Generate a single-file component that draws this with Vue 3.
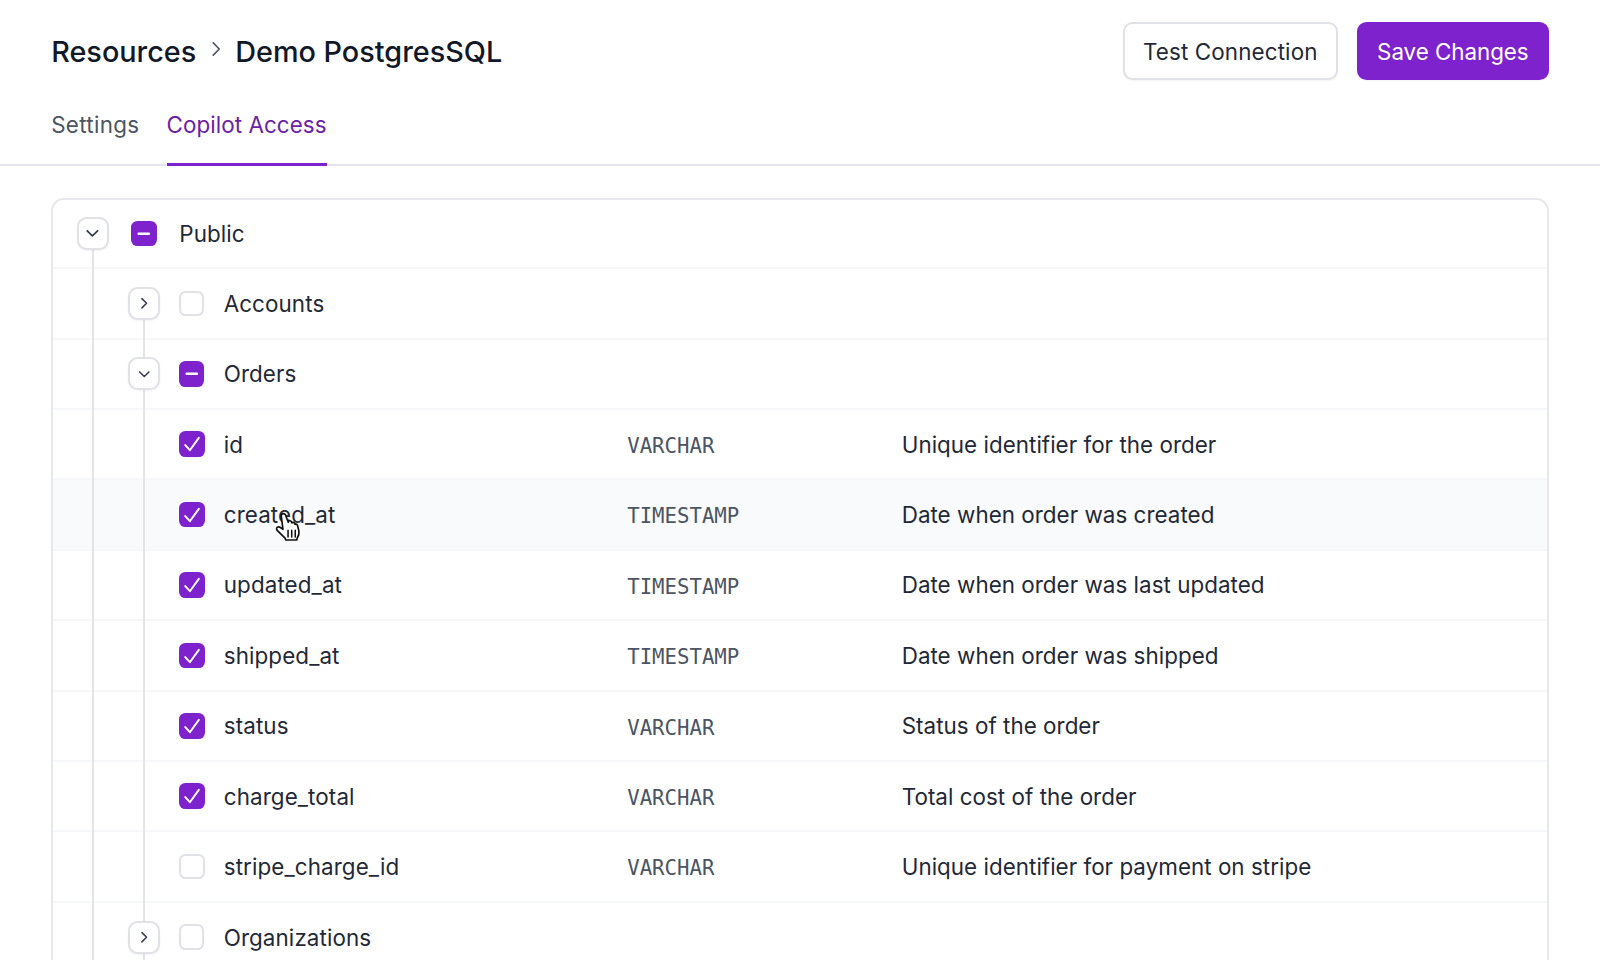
<template>
  <div class="page">
    <header class="top">
      <div class="top-row">
        <div class="crumbs">
          <span>Resources</span>
          <svg class="crumb-sep" viewBox="0 0 20 20" fill="none"><path d="M7.5 4.5 13 10l-5.500 5.500" stroke="currentColor" stroke-width="1.500" stroke-linecap="round" stroke-linejoin="round"/></svg>
          <span>Demo PostgresSQL</span>
        </div>
        <div class="actions">
          <button class="btn">Test Connection</button>
          <button class="btn btn-primary">Save Changes</button>
        </div>
      </div>
      <nav class="tabs">
        <a class="tab tab-plain">Settings</a>
        <a class="tab is-active">Copilot Access</a>
      </nav>
    </header>

    <main class="content">
      <div class="tree">
        <span class="line line-1"></span>
        <span class="line line-2"></span>
        <div
          v-for="row in rows"
          :key="row.name"
          class="row"
          :class="{ 'is-hover': row.hover }"
        >
          <div class="cell-name" :class="'level-' + row.level">
            <span v-if="row.toggle" class="toggle">
              <svg viewBox="0 0 20 20" fill="none">
                <path v-if="row.toggle === 'open'" d="M5 7.500 10 12.500l5-5" stroke="currentColor" stroke-width="1.700" stroke-linecap="round" stroke-linejoin="round"/>
                <path v-else d="M7.500 5 12.500 10l-5 5" stroke="currentColor" stroke-width="1.700" stroke-linecap="round" stroke-linejoin="round"/>
              </svg>
            </span>
            <span class="check" :class="{ 'is-on': row.state !== 'off' }">
              <svg v-if="row.state === 'all'" viewBox="0 0 16 16" fill="none"><path d="M3.900 8.800 6.800 12 12.400 4.300" stroke="#fff" stroke-width="1.200" stroke-linecap="round" stroke-linejoin="round"/></svg>
              <svg v-else-if="row.state === 'some'" viewBox="0 0 16 16" fill="none"><path d="M4.800 8h6.400" stroke="#fff" stroke-width="1.500" stroke-linecap="round"/></svg>
            </span>
            <span class="label">{{ row.name }}</span>
          </div>
          <div class="cell-type">{{ row.type }}</div>
          <div class="cell-desc">{{ row.desc }}</div>
        </div>
        <svg class="cursor" viewBox="0 0 26 28">
          <path d="M8.500 2.600c1.100-.5 2.200 0 2.700 1l2.500 6.600.3-1c.7-.7 2-.5 2.500.4l.5 1.100c.6-.7 1.900-.6 2.400.3l.5 1c.8-.4 1.800 0 2.100.9l1.300 5.100c.4 2.300-.2 4.400-1.400 6.200l-.6 2H11.500l-.7-1.700-6.900-6.800c-1-1-1-2.200-.2-2.900.8-.7 2-.6 2.900.1l2.300 1.700L7.400 4.900c-.3-1 .1-1.900 1.100-2.300Z" fill="#fff" stroke="#111" stroke-width="1.500" stroke-linejoin="round"/>
          <path d="M13.500 17.500v6M16.800 17.500v6M20 17.500v6" stroke="#111" stroke-width="1.400" stroke-linecap="round"/>
        </svg>
      </div>
    </main>
  </div>
</template>

<script setup>
const rows = [
  { name: 'Public', level: 0, toggle: 'open', state: 'some' },
  { name: 'Accounts', level: 1, toggle: 'closed', state: 'off' },
  { name: 'Orders', level: 1, toggle: 'open', state: 'some' },
  { name: 'id', level: 2, state: 'all', type: 'VARCHAR', desc: 'Unique identifier for the order' },
  { name: 'created_at', level: 2, state: 'all', type: 'TIMESTAMP', desc: 'Date when order was created', hover: true },
  { name: 'updated_at', level: 2, state: 'all', type: 'TIMESTAMP', desc: 'Date when order was last updated' },
  { name: 'shipped_at', level: 2, state: 'all', type: 'TIMESTAMP', desc: 'Date when order was shipped' },
  { name: 'status', level: 2, state: 'all', type: 'VARCHAR', desc: 'Status of the order' },
  { name: 'charge_total', level: 2, state: 'all', type: 'VARCHAR', desc: 'Total cost of the order' },
  { name: 'stripe_charge_id', level: 2, state: 'off', type: 'VARCHAR', desc: 'Unique identifier for payment on stripe' },
  { name: 'Organizations', level: 1, toggle: 'closed', state: 'off' },
]
</script>

<style>
html, body { margin: 0; height: 100%; overflow: hidden; background: #fff; }
</style>

<style scoped>
.page {
  height: 960px;
  overflow: hidden;
  font-family: Inter, "Liberation Sans", sans-serif;
  font-size: 22.4px;
  letter-spacing: 0.1px;
  color: #1f2937;
}

.top {
  border-bottom: 2px solid #e4e5eb;
  padding: 22.4px 51.2px 0;
}

.top-row {
  display: flex;
  align-items: center;
  justify-content: space-between;
}

.crumbs {
  display: flex;
  align-items: center;
  gap: 8.5px;
  font-size: 28.8px;
  font-weight: 450;
  letter-spacing: 0;
  color: #111827;
}

.crumb-sep { width: 22px; height: 22px; color: #4b5563; margin-top: -4px; }

.actions { display: flex; gap: 19.2px; }

.btn {
  height: 57.6px;
  padding: 0 18.2px;
  border: 2px solid #e0e2e8;
  border-radius: 9.6px;
  background: #fff;
  color: #1f2937;
  font: inherit;
  letter-spacing: 0.12px;
  font-weight: 400;
  box-shadow: 0 1px 2px rgba(0,0,0,0.05);
}

.btn-primary {
  background: #7e22ce;
  border-color: #7e22ce;
  color: #fff;
  letter-spacing: -0.05px;
}

.tabs {
  display: flex;
  gap: 27.3px;
  margin-top: 15.4px;
  margin-bottom: -2px;
}

.tab {
  padding: 16px 0 23px;
  line-height: 28.8px;
  letter-spacing: 0.06px;
  color: #4b5563;
  border-bottom: 3.2px solid transparent;
}

.tab-plain { letter-spacing: 0.3px; }

.tab.is-active {
  color: #6b21a8;
  border-bottom-color: #7e22ce;
}

.content { padding: 31.6px 51.2px 0; }

.tree {
  position: relative;
  border: 2px solid #e7e8ed;
  border-radius: 12.8px;
  overflow: hidden;
}

.line {
  position: absolute;
  bottom: 0;
  width: 2px;
  background: #e2e4ea;
}
.line-1 { left: 38.8px; top: 34px; }
.line-2 { left: 90px; top: 104px; }

.row {
  height: 70.42px;
  box-sizing: border-box;
  display: grid;
  grid-template-columns: 574px 274.5px 1fr;
  align-items: center;
  border-bottom: 2px solid #f6f7f9;
}

.row:first-of-type { height: 69.4px; }

.row.is-hover { background: #f9fafb; }

.cell-name {
  display: flex;
  align-items: center;
}

.level-0 { padding-left: 23.7px; }
.level-1 { padding-left: 75.1px; }
.level-2 { padding-left: 125.8px; }

.toggle {
  position: relative;
  z-index: 1;
  width: 32px;
  height: 33px;
  box-sizing: border-box;
  flex-shrink: 0;
  display: flex;
  align-items: center;
  justify-content: center;
  background: #fff;
  border: 2px solid #e0e2e8;
  border-radius: 9.6px;
  color: #374151;
  box-shadow: 0 1px 2px rgba(0,0,0,0.05);
}

.toggle svg { width: 18.5px; height: 18.5px; }
.level-0 .toggle svg { width: 20.8px; height: 20.8px; }

.level-0 .toggle { margin-right: 22.4px; }
.level-1 .toggle { margin-right: 18.6px; }
.level-0 .check { margin-right: 22.4px; }

.check {
  width: 25.6px;
  height: 25.6px;
  box-sizing: border-box;
  flex-shrink: 0;
  margin-right: 19.2px;
  border: 2px solid #e0e2e8;
  border-radius: 6.4px;
  background: #fff;
  display: flex;
}

.check.is-on {
  background: #7e22ce;
  border: 0;
}

.check svg { width: 25.6px; height: 25.6px; }

.cell-type {
  font-family: "DejaVu Sans Mono", "Liberation Mono", monospace;
  font-size: 20.7px;
  letter-spacing: 0;
  padding-top: 3.5px;
  color: #4b5563;
}

.cell-desc { letter-spacing: 0.03px; }

.cursor {
  position: absolute;
  left: 220px;
  top: 311px;
  width: 29px;
  height: 31px;
}
</style>
